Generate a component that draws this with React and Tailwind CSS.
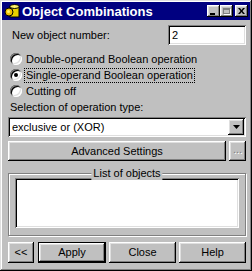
import React from 'react';

const raised = 'shadow-[inset_-1px_-1px_0_#000,inset_1px_1px_0_#fff,inset_-2px_-2px_0_#808080,inset_2px_2px_0_#dfdfdf]';
const sunken = 'shadow-[inset_1px_1px_0_#808080,inset_-1px_-1px_0_#fff,inset_2px_2px_0_#000,inset_-2px_-2px_0_#dfdfdf]';

function TitleIcon() {
  return (
    <svg width="16" height="16" viewBox="0 0 16 16">
      <rect x="6" y="3" width="9" height="11" fill="#e8d000" stroke="#000" strokeWidth="1" />
      <ellipse cx="10.5" cy="3.5" rx="4.5" ry="2" fill="#fff36a" stroke="#000" strokeWidth="1" />
      <circle cx="5" cy="9" r="4" fill="#f0c000" stroke="#000" strokeWidth="1" />
      <circle cx="4.5" cy="8.5" r="1.5" fill="#fff36a" />
    </svg>
  );
}

function CapButton({ children }) {
  return (
    <div className={`w-[13px] h-[12px] bg-[#c0c0c0] ${raised} flex items-center justify-center`}>{children}</div>
  );
}

function Radio({ checked, label, focus }) {
  return (
    <div className="h-[16px] flex items-center pl-[2px]">
      <div className={`w-[12px] h-[12px] rounded-full bg-white ${sunken} flex items-center justify-center`}>
        {checked && <div className="w-[4px] h-[4px] rounded-full bg-black" />}
      </div>
      <span className={`ml-[3px] px-[1px] leading-[13px] ${focus ? 'outline outline-1 outline-dotted outline-black' : 'outline outline-1 outline-transparent'}`}>{label}</span>
    </div>
  );
}

function Btn({ children, className = '', def, disabled }) {
  return (
    <div className={`h-[21px] bg-[#c0c0c0] flex items-center justify-center ${def ? 'border border-black' : ''} ${className}`}>
      <div className={`w-full h-full flex items-center justify-center ${raised} ${disabled ? 'text-[#808080] [text-shadow:1px_1px_0_#fff]' : ''}`}>{children}</div>
    </div>
  );
}

export default function App() {
  return (
    <div className="w-[252px] h-[271px] bg-[#c0c0c0] p-[2px] text-[11px] text-black shadow-[inset_-1px_-1px_0_#000,inset_1px_1px_0_#dfdfdf,inset_-2px_-2px_0_#808080,inset_2px_2px_0_#fff]" style={{ fontFamily: '"Liberation Sans", Arial, sans-serif' }}>
      {/* title bar */}
      <div className="h-[18px] bg-[#000080] flex items-center pl-[2px] pr-[2px]">
        <TitleIcon />
        <span className="ml-[2px] text-white font-bold text-[13px] leading-none">Object Combinations</span>
        <div className="ml-auto flex items-center">
          <CapButton><div className="w-[5px] h-[2px] bg-black mt-[5px] mr-[2px]" /></CapButton>
          <CapButton><div className="w-[7px] h-[6px] border border-[#808080] border-t-2 shadow-[1px_1px_0_#fff]" /></CapButton>
          <div className="w-[2px]" />
          <CapButton>
            <svg width="7" height="6" viewBox="0 0 7 6"><path d="M0 0h2l1.5 2 1.5-2h2L4.5 3 7 6H5L3.5 4 2 6H0l2.5-3z" fill="#000" /></svg>
          </CapButton>
        </div>
      </div>

      {/* body */}
      <div className="pl-[6px] pr-[4px] pt-[5px] flex flex-col">
        <div className="flex items-center h-[20px]">
          <span className="ml-[4px]">New object number:</span>
          <div className={`ml-auto w-[78px] h-[20px] bg-white ${sunken} flex items-center pl-[4px]`}>2</div>
        </div>

        <div className="mt-[6px] flex flex-col">
          <Radio label="Double-operand Boolean operation" />
          <Radio label="Single-operand Boolean operation" checked focus />
          <Radio label="Cutting off" />
        </div>

        <div className="h-[16px] flex items-center ml-[2px]">Selection of operation type:</div>

        <div className={`mt-[2px] h-[20px] bg-white ${sunken} flex items-center pl-[4px] pr-[2px]`}>
          <span>exclusive or (XOR)</span>
          <div className={`ml-auto w-[16px] h-[16px] bg-[#c0c0c0] ${raised} flex items-center justify-center`}>
            <svg width="7" height="4" viewBox="0 0 7 4"><path d="M0 0h7L3.5 4z" fill="#000" /></svg>
          </div>
        </div>

        <div className="mt-[4px] flex gap-[3px]">
          <Btn className="flex-1 !h-[20px]">Advanced Settings</Btn>
          <Btn className="w-[17px] !h-[20px]" disabled><span className="-mt-[3px]">...</span></Btn>
        </div>

        <div className="relative mt-[12px] h-[63px] border border-[#808080] shadow-[1px_1px_0_#fff,inset_1px_1px_0_#fff] px-[6px] pt-[4px]">
          <span className="absolute -top-[8px] left-1/2 -translate-x-1/2 bg-[#c0c0c0] px-[2px] leading-[14px]">List of objects</span>
          <div className={`h-[50px] bg-white ${sunken}`} />
        </div>

        <div className="mt-[6px] flex">
          <Btn className="w-[26px]">&lt;&lt;</Btn>
          <Btn className="w-[68px] ml-[4px]" def>Apply</Btn>
          <Btn className="w-[67px] ml-[3px]">Close</Btn>
          <Btn className="w-[67px] ml-[3px]">Help</Btn>
        </div>
      </div>
    </div>
  );
}
